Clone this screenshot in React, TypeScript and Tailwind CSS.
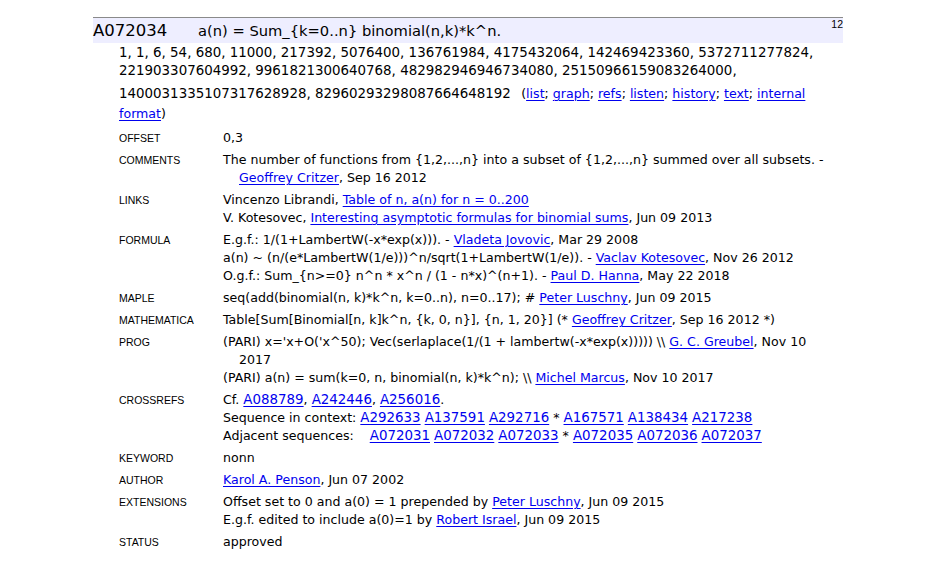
const body = { fontFamily: '"DejaVu Sans", "Noto Sans", sans-serif' };
const label = { fontFamily: '"Liberation Sans", Arial, sans-serif' };

function A({ children }: { children: React.ReactNode }) {
  return <a href="#" className="text-[#0000ee] underline underline-offset-2">{children}</a>;
}

function Seq({ id }: { id: string }) {
  return (
    <span className="text-[13.4px]">
      <A>{id}</A>
    </span>
  );
}

type Row = { name: string; lines: React.ReactNode[] };

const rows: Row[] = [
  { name: "OFFSET", lines: ["0,3"] },
  {
    name: "COMMENTS",
    lines: [
      "The number of functions from {1,2,...,n} into a subset of {1,2,...,n} summed over all subsets. -",
      <span className="pl-4"><A>Geoffrey Critzer</A>, Sep 16 2012</span>,
    ],
  },
  {
    name: "LINKS",
    lines: [
      <>Vincenzo Librandi, <A>Table of n, a(n) for n = 0..200</A></>,
      <>V. Kotesovec, <A>Interesting asymptotic formulas for binomial sums</A>, Jun 09 2013</>,
    ],
  },
  {
    name: "FORMULA",
    lines: [
      <>E.g.f.: 1/(1+LambertW(-x*exp(x))). - <A>Vladeta Jovovic</A>, Mar 29 2008</>,
      <>a(n) ~ (n/(e*LambertW(1/e)))^n/sqrt(1+LambertW(1/e)). - <A>Vaclav Kotesovec</A>, Nov 26 2012</>,
      <>O.g.f.: Sum_{"{"}n&gt;=0{"}"} n^n * x^n / (1 - n*x)^(n+1). - <A>Paul D. Hanna</A>, May 22 2018</>,
    ],
  },
  {
    name: "MAPLE",
    lines: [<>seq(add(binomial(n, k)*k^n, k=0..n), n=0..17); # <A>Peter Luschny</A>, Jun 09 2015</>],
  },
  {
    name: "MATHEMATICA",
    lines: [
      <>Table[Sum[Binomial[n, k]k^n, {"{"}k, 0, n{"}"}], {"{"}n, 1, 20{"}"}] (* <A>Geoffrey Critzer</A>, Sep 16 2012 *)</>,
    ],
  },
  {
    name: "PROG",
    lines: [
      <>(PARI) x='x+O('x^50); Vec(serlaplace(1/(1 + lambertw(-x*exp(x))))) \\ <A>G. C. Greubel</A>, Nov 10</>,
      <span className="pl-4">2017</span>,
      <>(PARI) a(n) = sum(k=0, n, binomial(n, k)*k^n); \\ <A>Michel Marcus</A>, Nov 10 2017</>,
    ],
  },
  {
    name: "CROSSREFS",
    lines: [
      <>Cf. <Seq id="A088789" />, <Seq id="A242446" />, <Seq id="A256016" />.</>,
      <>
        Sequence in context: <Seq id="A292633" /> <Seq id="A137591" /> <Seq id="A292716" /> * <Seq id="A167571" />{" "}
        <Seq id="A138434" /> <Seq id="A217238" />
      </>,
      <>
        Adjacent sequences:&nbsp;&nbsp;&nbsp; <Seq id="A072031" /> <Seq id="A072032" /> <Seq id="A072033" /> *{" "}
        <Seq id="A072035" /> <Seq id="A072036" /> <Seq id="A072037" />
      </>,
    ],
  },
  { name: "KEYWORD", lines: ["nonn"] },
  { name: "AUTHOR", lines: [<><A>Karol A. Penson</A>, Jun 07 2002</>] },
  {
    name: "EXTENSIONS",
    lines: [
      <>Offset set to 0 and a(0) = 1 prepended by <A>Peter Luschny</A>, Jun 09 2015</>,
      <>E.g.f. edited to include a(0)=1 by <A>Robert Israel</A>, Jun 09 2015</>,
    ],
  },
  { name: "STATUS", lines: ["approved"] },
];

const links = ["list", "graph", "refs", "listen", "history", "text", "internal"];

export default function App() {
  return (
    <div className="min-h-screen bg-white pt-[17px] text-black" style={body}>
      <div className="ml-[93px] w-[750px]">
        {/* sequence header bar */}
        <div className="flex h-[26px] border-t border-[#8a8a8a] bg-[#eeeeff]">
          <span className="w-[105px] text-[16.5px] leading-[25px]">A072034</span>
          <span className="text-[14.7px] leading-[25px]">a(n) = Sum_{"{"}k=0..n{"}"} binomial(n,k)*k^n.</span>
          <span className="ml-auto text-[10.5px] leading-[12px]" style={label}>12</span>
        </div>

        {/* terms */}
        <div className="mt-[1px] pl-[26px] text-[13.4px] leading-[18px] whitespace-nowrap">
          <div>1, 1, 6, 54, 680, 11000, 217392, 5076400, 136761984, 4175432064, 142469423360, 5372711277824,</div>
          <div>221903307604992, 9961821300640768, 482982946946734080, 25150966159083264000,</div>
          <div className="mt-[5px]">
            1400031335107317628928, 82960293298087664648192{" "}
            <span className="ml-[6px] text-[12.6px]">
              (
              {links.map((l, i) => (
                <span key={l}>
                  <A>{l}</A>
                  {i < links.length - 1 ? "; " : " "}
                </span>
              ))}
            </span>
          </div>
          <div className="mt-[2px] text-[12.6px]">
            <A>format</A>)
          </div>
        </div>

        {/* field table */}
        <div className="mt-[4px] pl-[26px]">
          {rows.map((r) => (
            <div key={r.name} className="flex py-[2px] leading-[18px]">
              <div className="w-[104px] shrink-0 text-[10.5px]" style={label}>
                {r.name}
              </div>
              <div className="text-[12.6px] whitespace-nowrap">
                {r.lines.map((ln, i) => (
                  <div key={i}>{ln}</div>
                ))}
              </div>
            </div>
          ))}
        </div>
      </div>
    </div>
  );
}
